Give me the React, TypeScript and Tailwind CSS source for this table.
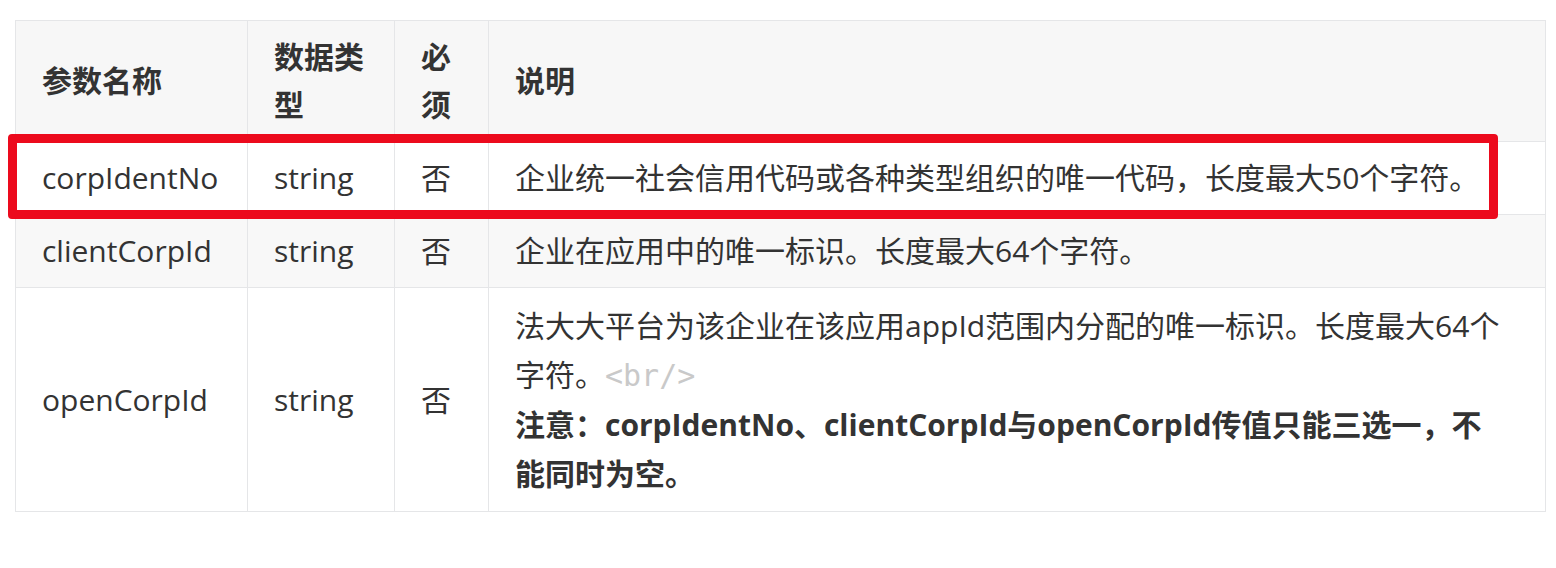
import React from 'react';

const rows = [
  { name: 'corpIdentNo', type: 'string', required: '否', desc: '企业统一社会信用代码或各种类型组织的唯一代码，长度最大50个字符。', bg: 'bg-white' },
  { name: 'clientCorpId', type: 'string', required: '否', desc: '企业在应用中的唯一标识。长度最大64个字符。', bg: 'bg-[#f8f8f8]' },
];

const cell = 'border border-[#e5e6e8] px-[26px] py-[12px] align-middle';

const App: React.FC = () => {
  return (
    <div
      className="w-[1556px] h-[568px] bg-white pl-[15px] pt-[20px] text-[30px] leading-[48px] text-[#333]"
      style={{ fontFamily: '"Open Sans", "Noto Sans CJK SC", sans-serif' }}
    >
      <div className="relative w-[1531px]">
        <table className="w-[1531px] table-fixed border-collapse">
          <colgroup>
            <col className="w-[232px]" />
            <col className="w-[147px]" />
            <col className="w-[94px]" />
            <col />
          </colgroup>
          <thead>
            <tr className="bg-[#f7f7f7]">
              <th className={`${cell} text-left font-bold`}>参数名称</th>
              <th className={`${cell} text-left font-bold`}>数据类型</th>
              <th className={`${cell} text-left font-bold`}>必须</th>
              <th className={`${cell} text-left font-bold`}>说明</th>
            </tr>
          </thead>
          <tbody>
            {rows.map(r => (
              <tr key={r.name} className={r.bg}>
                <td className={cell}>{r.name}</td>
                <td className={cell}>{r.type}</td>
                <td className={cell}>{r.required}</td>
                <td className={`${cell} whitespace-nowrap`}>{r.desc}</td>
              </tr>
            ))}
            <tr className="bg-white">
              <td className={cell}>openCorpId</td>
              <td className={cell}>string</td>
              <td className={cell}>否</td>
              <td className={`${cell} leading-[49px] py-[13px]`}>
                法大大平台为该企业在该应用appId范围内分配的唯一标识。长度最大64个<br />
                字符。<span className="text-[#c9c9c9]" style={{ fontFamily: '"DejaVu Sans Mono", monospace' }}>&lt;br/&gt;</span>
                <br />
                <strong className="font-bold">
                  注意：corpIdentNo、clientCorpId与openCorpId传值只能三选一，不<br />
                  能同时为空。
                </strong>
              </td>
            </tr>
          </tbody>
        </table>

        {/* highlight box */}
        <div className="absolute left-[-7px] top-[114px] w-[1490px] h-[85px] rounded-[4px] border-[9px] border-[#ec0a1d] pointer-events-none" />
      </div>
    </div>
  );
};

export default App;
